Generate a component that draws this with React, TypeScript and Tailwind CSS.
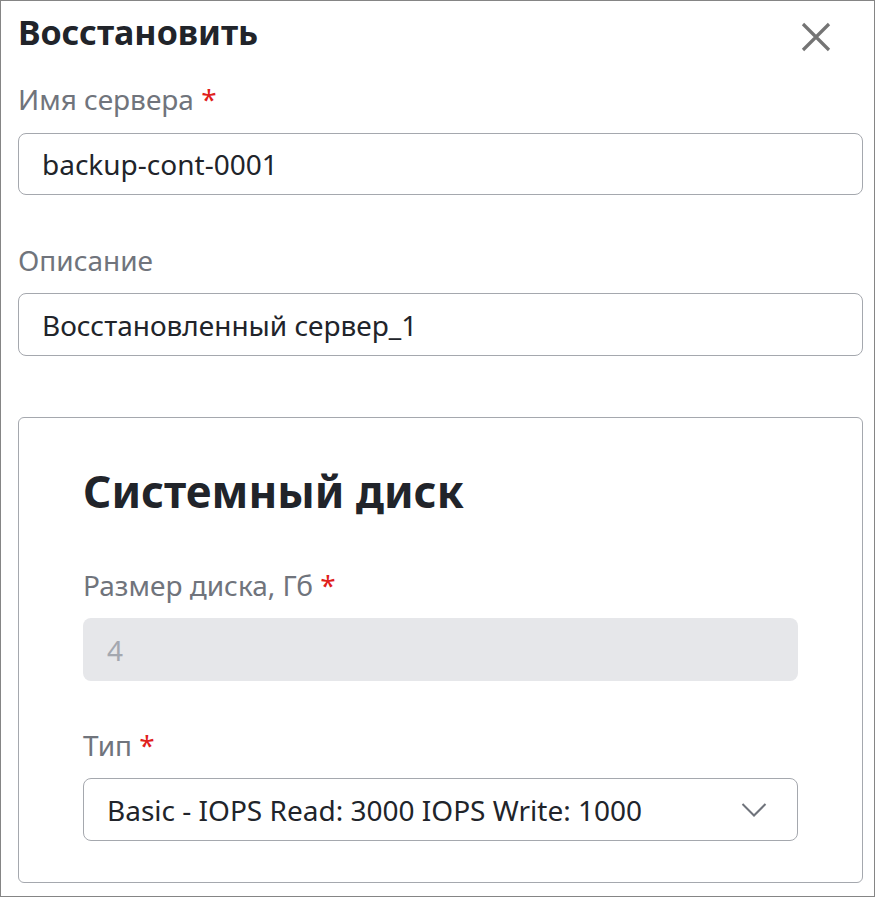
import React from "react";

function Label({ text, required }: { text: string; required?: boolean }) {
  return (
    <div className="text-[28px] leading-[34px] text-[#70747c]">
      {text}
      {required && <span className="text-[#e0201b]"> *</span>}
    </div>
  );
}

export default function App() {
  return (
    <div
      className="w-[875px] h-[897px] border border-[#858585] bg-white text-[#21242a] overflow-hidden"
      style={{ fontFamily: '"Noto Sans", sans-serif' }}
    >
      <div className="pl-[17px] pr-[11px]">
        {/* Header */}
        <div className="flex items-center justify-between h-[67px]">
          <h1 className="text-[34px] font-bold leading-none pb-[6px]">Восстановить</h1>
          <button className="mr-[32px] mt-[4px] text-[#747474]">
            <svg width="30" height="30" viewBox="0 0 30 30" fill="none" stroke="currentColor" strokeWidth="3.2">
              <path d="M2 2 L28 28 M28 2 L2 28" />
            </svg>
          </button>
        </div>

        <div className="mt-[14px]">
          <Label text="Имя сервера" required />
        </div>
        <div className="mt-[17px] h-[62px] rounded-[8px] border border-[#a5a8ae] flex items-center px-[23px] text-[28px]">
          backup-cont-0001
        </div>

        <div className="mt-[48px]">
          <Label text="Описание" />
        </div>
        <div className="mt-[16px] h-[63px] rounded-[8px] border border-[#a5a8ae] flex items-center px-[23px] text-[28px]">
          Восстановленный сервер_1
        </div>

        {/* System disk card */}
        <div className="mt-[61px] h-[466px] rounded-[6px] border border-[#a5a8ae] px-[64px] pt-[43px]">
          <h2 className="text-[44px] font-bold leading-[60px]">Системный диск</h2>
          <div className="mt-[47px]">
            <Label text="Размер диска, Гб" required />
          </div>
          <div className="mt-[16px] h-[63px] rounded-[8px] bg-[#e6e7ea] flex items-center px-[24px] text-[28px] text-[#a4a8b0]">
            4
          </div>
          <div className="mt-[47px]">
            <Label text="Тип" required />
          </div>
          <div className="mt-[16px] h-[63px] rounded-[8px] border border-[#a5a8ae] flex items-center justify-between pl-[23px] pr-[30px] text-[28px]">
            <span>Basic - IOPS Read: 3000 IOPS Write: 1000</span>
            <svg width="26" height="16" viewBox="0 0 26 16" fill="none" stroke="#6f737b" strokeWidth="2">
              <path d="M1.5 2 L13 13.5 L24.5 2" />
            </svg>
          </div>
        </div>
      </div>
    </div>
  );
}
